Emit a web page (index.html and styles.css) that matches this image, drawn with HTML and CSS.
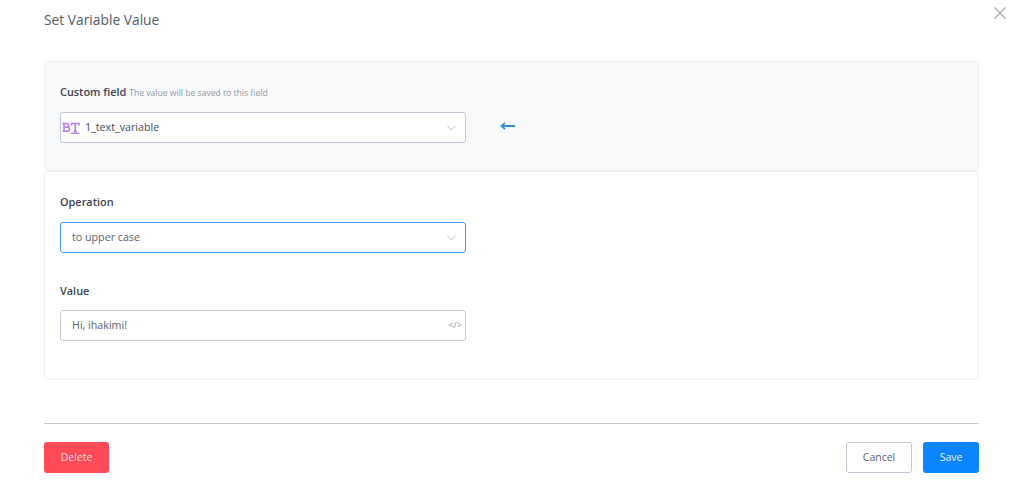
FILE: index.html
```html
<!DOCTYPE html>
<html lang="en">
<head>
<meta charset="UTF-8">
<title>Set Variable Value</title>
<link rel="stylesheet" href="styles.css">
</head>
<body>
<div class="modal">
  <button type="button" class="close" aria-label="Close">
    <svg width="12" height="12" viewBox="0 0 13 13"><path d="M.5.5l12 12M12.500.5l-12 12"/></svg>
  </button>
  <div class="modal-title">Set Variable Value</div>

  <div class="panel panel-grey">
    <div class="field-label">Custom field <span class="hint">The value will be saved to this field</span></div>
    <div class="field-row">
      <div class="control control-grey">
        <span class="type-icon">
          <svg width="18" height="13" viewBox="0 0 18 13"><path d="M.5 2.500h4.500a1.800 1.800 0 0 1 0 3.700h-3M2 6.200h3.500a2 2 0 0 1 0 4.100h-5M2 2.500v7.800"/><path d="M9.500 4.500v-2h7.500v2M13.200 2.500v8M11.500 10.500h3.500M9 12.500h8.500"/></svg>
        </span>
        <span class="control-text dark">1_text_variable</span>
        <svg class="chevron" width="9" height="6" viewBox="0 0 10 6"><path d="M.5.5L5 5 9.500.5"/></svg>
      </div>
      <svg class="arrow" width="15" height="8" viewBox="0 0 15 8"><path d="M15 4H2M5 .8L1.500 4 5 7.200"/></svg>
    </div>
  </div>

  <div class="panel">
    <div class="field">
      <div class="field-label">Operation</div>
      <div class="control control-blue pad">
        <span class="control-text">to upper case</span>
        <svg class="chevron" width="9" height="6" viewBox="0 0 10 6"><path d="M.5.5L5 5 9.500.5"/></svg>
      </div>
    </div>
    <div class="field">
      <div class="field-label">Value</div>
      <div class="control control-grey pad">
        <span class="control-text">Hi, ihakimi!</span>
        <span class="code-icon">&lt;/&gt;</span>
      </div>
    </div>
  </div>

  <div class="footer">
    <button type="button" class="btn btn-delete">Delete</button>
    <div class="footer-right">
      <button type="button" class="btn btn-cancel">Cancel</button>
      <button type="button" class="btn btn-save">Save</button>
    </div>
  </div>
</div>
</body>
</html>
```

FILE: styles.css
```css
* {
  box-sizing: border-box;
}
html, body {
  margin: 0;
  height: 100%;
  overflow: hidden;
  background: #fff;
}
body {
  font-family: "Open Sans", "Noto Sans", sans-serif;
  font-size: 11px;
  color: #555b66;
}
.modal {
  position: relative;
  padding: 0 45px 0 44px;
}
.modal-title {
  height: 61px;
  padding-top: 10px;
  font-size: 13.800px;
  line-height: 20px;
  color: #555b66;
}
.close {
  position: absolute;
  top: 7px;
  right: 18px;
  width: 12px;
  height: 12px;
  padding: 0;
  border: 0;
  background: none;
}
.close svg {
  display: block;
  fill: none;
  stroke: #a9adb3;
  stroke-width: 1.400;
}
.panel {
  padding: 20px 15px 38px;
  border: 1px solid #f0f1f5;
  border-radius: 4px;
}
.panel-grey {
  height: 110px;
  background: #f8f9fb;
}
.field + .field {
  margin-top: 28px;
}
.field + .field .field-label {
  margin-bottom: 9px;
}
.field-label {
  height: 20px;
  margin-bottom: 10px;
  font-size: 10.900px;
  font-weight: 600;
  line-height: 20px;
  color: #3f4450;
}
.hint {
  font-size: 8.600px;
  font-weight: 400;
  color: #959ba6;
}
.field-row {
  display: flex;
  align-items: center;
}
.control {
  display: flex;
  align-items: center;
  width: 406px;
  height: 31px;
  padding: 0 9px 2px 0;
  border: 1px solid #c3c8d6;
  border-radius: 3px;
  background: #fff;
}
.control-blue {
  border-color: #3f9cf0;
}
.control.pad {
  padding-left: 11px;
}
.control-text {
  flex: 1;
  font-size: 10.700px;
  color: #5b616c;
}
.control-text.dark {
  color: #474c57;
}
.type-icon {
  display: flex;
  margin: 2px 5px 0 1px;
}
.type-icon svg {
  fill: none;
  stroke: #b27cf5;
  stroke-width: 1.500;
}
.chevron {
  margin-top: 2px;
  fill: none;
  stroke: #a9aeb8;
}
.code-icon {
  margin-right: -6px;
  font-size: 9px;
  font-weight: 600;
  color: #a3a8b1;
}
.arrow {
  margin: -3px 0 0 34px;
  fill: none;
  stroke: #2b94d8;
  stroke-width: 1.800;
}
.footer {
  display: flex;
  justify-content: space-between;
  margin-top: 43px;
  padding-top: 18px;
  border-top: 1px solid #c6c8cd;
}
.footer-right {
  display: flex;
  gap: 11px;
}
.btn {
  height: 31px;
  padding: 0 0 2px;
  border: 1px solid transparent;
  border-radius: 3px;
  font-family: inherit;
  font-size: 10.500px;
}
.btn-delete {
  width: 65px;
  background: #ff4a58;
  color: #ffd9dc;
}
.btn-cancel {
  width: 66px;
  background: #fff;
  border-color: #c3c8d6;
  color: #5b616c;
}
.btn-save {
  width: 56px;
  background: #0a84ff;
  color: #e4f1ff;
}
```
